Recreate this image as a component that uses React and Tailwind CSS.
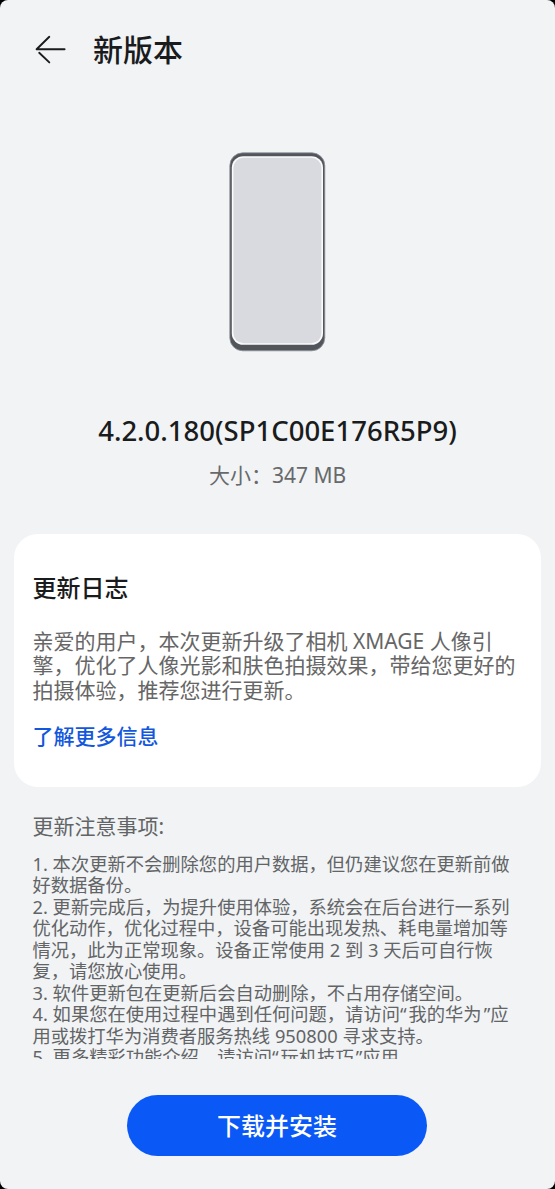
import React from 'react';

const logLines = [
  '亲爱的用户，本次更新升级了相机 XMAGE 人像引',
  '擎，优化了人像光影和肤色拍摄效果，带给您更好的',
  '拍摄体验，推荐您进行更新。',
];

const noteLines = [
  '1. 本次更新不会删除您的用户数据，但仍建议您在更新前做',
  '好数据备份。',
  '2. 更新完成后，为提升使用体验，系统会在后台进行一系列',
  '优化动作，优化过程中，设备可能出现发热、耗电量增加等',
  '情况，此为正常现象。设备正常使用 2 到 3 天后可自行恢',
  '复，请您放心使用。',
  '3. 软件更新包在更新后会自动删除，不占用存储空间。',
  '4. 如果您在使用过程中遇到任何问题，请访问“我的华为”应',
  '用或拨打华为消费者服务热线 950800 寻求支持。',
  '5. 更多精彩功能介绍，请访问“玩机技巧”应用',
];

// quoted names get a little air inside the quote marks
const NoteLine = ({ text }) => {
  const [before, rest] = text.split('“');
  if (!rest) return <p>{text}</p>;
  const [quoted, after] = rest.split('”');

  return (
    <p>
      {before}“<span className="mx-[2px]">{quoted}</span>”{after}
    </p>
  );
};

const BackArrow = () => (
  <svg width="32" height="30" viewBox="0 0 32 30" fill="none" stroke="#1a1b1c" strokeWidth="1.9" strokeLinecap="round" strokeLinejoin="round">
    <path d="M14.3 1.8 L1.6 14.3 H29.6 M4.2 17.8 L14.3 27.4" />
  </svg>
);

const Phone = () => (
  <svg width="97" height="200" viewBox="0 0 97 200">
    <rect x="0.8" y="0.8" width="95" height="198" rx="13" fill="#53555d" />
    <rect x="0.8" y="0.8" width="95" height="198" rx="13" fill="none" stroke="#90939a" strokeWidth="0.8" />
    <rect x="2.8" y="4.2" width="91.2" height="188.6" rx="11.5" fill="#fbfbfc" />
    <rect x="4.4" y="5.8" width="88" height="185.4" rx="10" fill="#d9dadf" />
  </svg>
);

const App = () => {
  return (
    <div className="bg-black">
      <div className="flex h-[1189px] w-[555px] flex-col overflow-hidden rounded-[8px] bg-[#f1f3f5] font-['Noto_Sans','Noto_Sans_CJK_SC',sans-serif] whitespace-nowrap">
        <header className="flex h-[100px] items-center gap-[26px] pl-[35px]">
          <BackArrow />
          <h1 className="text-[30px] leading-[40px] font-medium text-[#1a1b1c]">新版本</h1>
        </header>

        <div className="flex h-[433.5px] shrink-0 flex-col items-center pt-[52px]">
          <Phone />
          <div className="mt-[59px] text-[27.5px] leading-[40px] font-medium text-[#1a1b1c]">
            4.2.0.180(SP1C00E176R5P9)
          </div>
          <div className="mt-[10px] text-[21px] leading-[28px] text-[#67696b]">大小：347 MB</div>
        </div>

        <section className="mx-[14px] h-[253px] shrink-0 rounded-[24px] bg-white pt-[37px] pl-[18.5px]">
          <h2 className="text-[24px] leading-[34px] font-medium text-[#1a1b1c]">更新日志</h2>
          <div className="mt-[24px] text-[21px] leading-[24.6px] text-[#666666]">
            {logLines.map((line) => (
              <p key={line}>{line}</p>
            ))}
          </div>
          <a className="mt-[19px] block text-[21px] leading-[30px] font-medium text-[#1257dc]">了解更多信息</a>
        </section>

        <section className="h-[272px] shrink-0 overflow-hidden pt-[24px] pl-[32.5px] text-[#626466]">
          <h3 className="text-[21px] leading-[30px]">更新注意事项:</h3>
          <div className="mt-[12px] text-[18.3px] leading-[21.55px]">
            {noteLines.map((line) => (
              <NoteLine key={line} text={line} />
            ))}
          </div>
        </section>

        <button className="mt-[36.5px] ml-[127px] h-[61px] w-[300px] shrink-0 rounded-full bg-[#0a59f7] text-[24px] font-medium text-white">
          下载并安装
        </button>
      </div>
    </div>
  );
};

export default App;
